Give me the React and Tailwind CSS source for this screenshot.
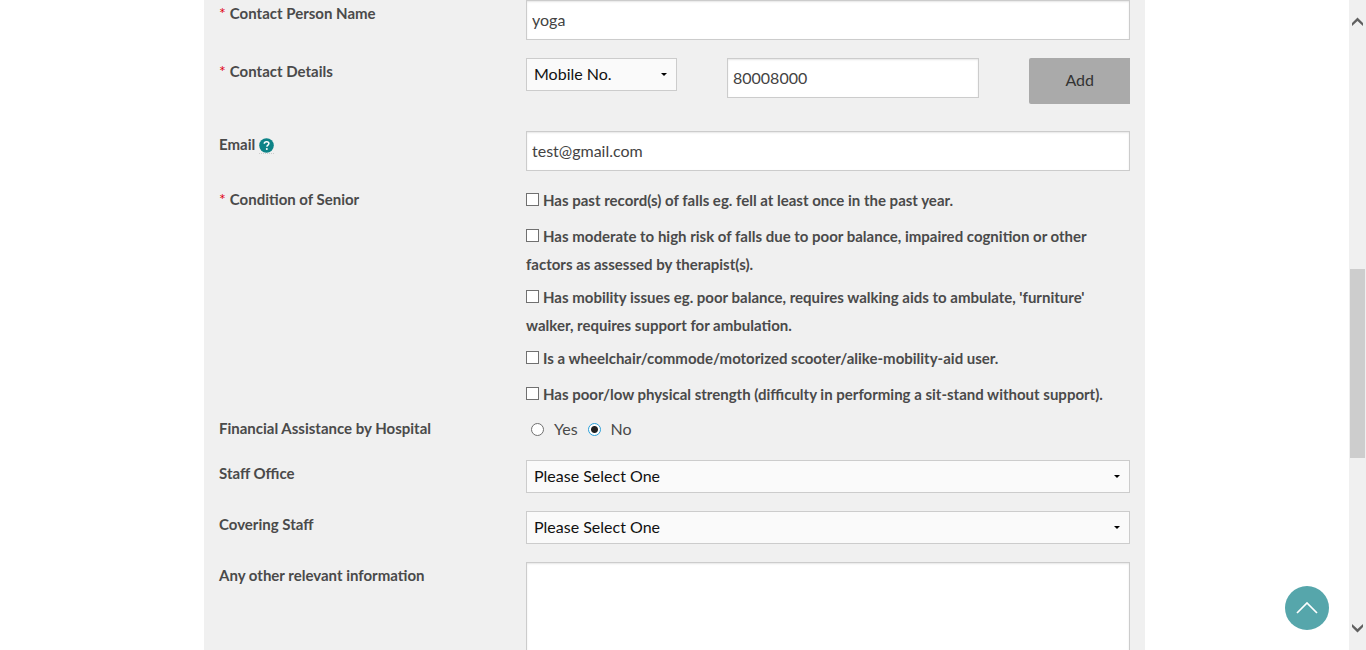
import React from "react";

const inputClass =
  "block h-10 w-full border border-[#cccccc] bg-white px-[5px] pb-px text-base text-[#434343] shadow-[inset_0_1px_2px_rgba(0,0,0,0.1)] outline-none";

const conditions = [
  "Has past record(s) of falls eg. fell at least once in the past year.",
  "Has moderate to high risk of falls due to poor balance, impaired cognition or other factors as assessed by therapist(s).",
  "Has mobility issues eg. poor balance, requires walking aids to ambulate, 'furniture' walker, requires support for ambulation.",
  "Is a wheelchair/commode/motorized scooter/alike-mobility-aid user.",
  "Has poor/low physical strength (difficulty in performing a sit-stand without support).",
];

function Required() {
  return <span className="mr-1 text-base leading-none font-normal text-[#e00012]">*</span>;
}

function Row({ label, htmlFor, id, required, help, children }) {
  const Tag = htmlFor ? "label" : "span";
  return (
    <div className="grid grid-cols-[307px_minmax(0,1fr)] items-start">
      <div className="flex items-center text-[15px] leading-[26px] font-bold">
        <Tag htmlFor={htmlFor} id={id}>
          {required && <Required />}
          {label}
        </Tag>
        {help}
      </div>
      <div className="min-w-0">{children}</div>
    </div>
  );
}

function Select({ id, label, options }) {
  return (
    <div className="relative">
      <select
        id={id}
        aria-label={label}
        className="block h-[33px] w-full appearance-none border border-[#cccccc] bg-[#fafafa] pr-6 pb-[2px] pl-[7px] text-base leading-6 text-[#111111] outline-none"
      >
        {options.map((option) => (
          <option key={option}>{option}</option>
        ))}
      </select>
      <svg
        viewBox="0 0 6 3"
        className="pointer-events-none absolute top-[15px] right-[10px] h-[3px] w-1.5"
        aria-hidden="true"
      >
        <path d="M0 0h6L3 3z" fill="#000" />
      </svg>
    </div>
  );
}

function HelpButton() {
  return (
    <button type="button" aria-label="Email help" className="ml-1 mt-1 border-b border-dotted border-[#cccccc]">
      <svg viewBox="0 0 15 15" className="block h-[15px] w-[15px]" aria-hidden="true">
        <circle cx="7.5" cy="7.5" r="7.3" fill="#0d8387" />
        <path
          d="M5.3 5.8c0-1.4 1-2.1 2.3-2.1s2.3.8 2.3 1.9c0 1.5-2 1.6-2 3.2"
          fill="none"
          stroke="#fff"
          strokeWidth="1.5"
        />
        <circle cx="7.8" cy="11" r="1" fill="#fff" />
      </svg>
    </button>
  );
}

function Radio({ value, defaultChecked }) {
  return (
    <label className="flex items-center gap-[10px]">
      <input
        type="radio"
        name="assistance"
        value={value}
        defaultChecked={defaultChecked}
        className="h-[13px] w-[13px] appearance-none rounded-full border border-[#707070] bg-white checked:border-[#2a9fd8] checked:bg-[radial-gradient(circle,#222222_3px,#ffffff_4px)]"
      />
      {value}
    </label>
  );
}

function ScrollTrack() {
  return (
    <div className="flex w-[17px] shrink-0 flex-col items-center bg-[#f0f0f0] pt-[17px] pb-[17px]" aria-hidden="true">
      <svg viewBox="0 0 11 9" className="h-[9px] w-[11px]">
        <path d="M0 6 5.5.5 11 6v3L5.5 4 0 9z" fill="#606060" />
      </svg>
      <div className="flex w-[15px] grow flex-col">
        <div className="grow-[243]" />
        <div className="grow-[189] bg-[#cdcdcd]" />
        <div className="grow-[166]" />
      </div>
      <svg viewBox="0 0 11 9" className="h-[9px] w-[11px]">
        <path d="M0 3 5.5 8.5 11 3V0L5.5 5 0 0z" fill="#606060" />
      </svg>
    </div>
  );
}

export default function App() {
  return (
    <div className="flex h-screen overflow-hidden bg-white font-[Lato,sans-serif] text-[#4a4a4a]">
      <main className="min-w-0 flex-1">
        <form className="mx-auto max-w-[941px] bg-[#f0f0f0] px-[15px] pb-10">
          <div className="pb-[18px]">
            <Row label="Contact Person Name" htmlFor="person" required>
              <input id="person" type="text" defaultValue="yoga" className={inputClass} />
            </Row>
          </div>

          <div className="pb-[27px]">
            <Row label="Contact Details" htmlFor="number" required>
              <div className="flex items-start gap-[50px]">
                <div className="w-1/4">
                  <Select id="kind" label="Contact type" options={["Mobile No.", "Home No."]} />
                </div>
                <div className="min-w-0 flex-1">
                  <input id="number" type="text" defaultValue="80008000" className={inputClass} />
                </div>
                <button type="button" className="h-[46px] w-1/6 rounded-l-xs bg-[#aaaaaa] pb-[2px] text-base text-[#333333]">
                  Add
                </button>
              </div>
            </Row>
          </div>

          <div className="pb-[15px]">
            <Row label="Email" htmlFor="email" help={<HelpButton />}>
              <input id="email" type="email" defaultValue="test@gmail.com" className={inputClass} />
            </Row>
          </div>

          <div className="pb-1">
            <Row label="Condition of Senior" id="condition" required>
              <div role="group" aria-labelledby="condition" className="flex flex-col gap-[5px]">
                {conditions.map((text) => (
                  <label key={text} className="block min-h-[31px] text-[15px] leading-7 font-bold">
                    <input
                      type="checkbox"
                      className="mr-1 h-[13px] w-[13px] appearance-none border border-[#707070] bg-white align-baseline"
                    />
                    {text}
                  </label>
                ))}
              </div>
            </Row>
          </div>

          <div className="pb-[17px]">
            <Row label="Financial Assistance by Hospital" id="assistance">
              <div
                role="radiogroup"
                aria-labelledby="assistance"
                className="flex gap-[10px] pl-[5px] text-base leading-7"
              >
                <Radio value="Yes" />
                <Radio value="No" defaultChecked />
              </div>
            </Row>
          </div>

          <div className="flex flex-col gap-[18px]">
            <Row label="Staff Office" htmlFor="office">
              <Select id="office" options={["Please Select One"]} />
            </Row>
            <Row label="Covering Staff" htmlFor="covering">
              <Select id="covering" options={["Please Select One"]} />
            </Row>
            <Row label="Any other relevant information" htmlFor="info">
              <textarea
                id="info"
                className="block h-40 w-full resize-none border border-[#cccccc] bg-white p-2 text-base shadow-[inset_0_1px_2px_rgba(0,0,0,0.1)] outline-none"
              />
            </Row>
          </div>
        </form>
      </main>

      <ScrollTrack />

      <button
        type="button"
        aria-label="Back to top"
        className="fixed right-[37px] bottom-5 flex h-11 w-11 items-center justify-center rounded-full bg-[#56a6ab]"
      >
        <svg viewBox="0 0 22 12" className="h-3 w-[22px]" aria-hidden="true">
          <path d="M1 11 11 1l10 10" fill="none" stroke="#fff" strokeWidth="1.7" />
        </svg>
      </button>
    </div>
  );
}
